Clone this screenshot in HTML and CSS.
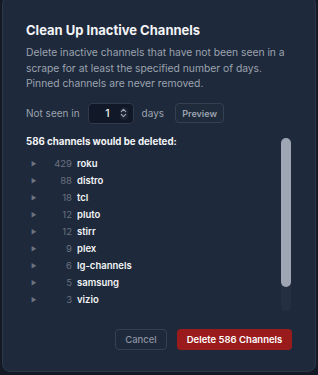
FILE: index.html
```html
<!DOCTYPE html>
<html>
<head>
<meta charset="utf-8">
<link rel="stylesheet" href="styles.css">
</head>
<body>
<div class="dialog">
  <h2 class="title">Clean Up Inactive Channels</h2>
  <p class="desc">Delete inactive channels that have not been seen in a scrape for at least the specified number of days. Pinned channels are never removed.</p>
  <div class="controls">
    <span class="label">Not seen in</span>
    <div class="num">
      <span class="num-val">1</span>
      <span class="spin"><svg width="7" height="12" viewBox="0 0 7 12"><path d="M1.3 4.6 L3.5 2.3 L5.7 4.6 M1.3 7.4 L3.5 9.7 L5.7 7.4" fill="none" stroke="#a3aab6" stroke-width="1.1" stroke-linecap="round" stroke-linejoin="round"/></svg></span>
    </div>
    <span class="label days">days</span>
    <button class="btn-small">Preview</button>
  </div>
  <div class="listwrap">
    <div class="list">
      <div class="heading">586 channels would be deleted:</div>
      <div class="row"><span class="tri">►</span><span class="cnt">429</span><span class="name">roku</span></div>
      <div class="row"><span class="tri">►</span><span class="cnt">88</span><span class="name">distro</span></div>
      <div class="row"><span class="tri">►</span><span class="cnt">18</span><span class="name">tcl</span></div>
      <div class="row"><span class="tri">►</span><span class="cnt">12</span><span class="name">pluto</span></div>
      <div class="row"><span class="tri">►</span><span class="cnt">12</span><span class="name">stirr</span></div>
      <div class="row"><span class="tri">►</span><span class="cnt">9</span><span class="name">plex</span></div>
      <div class="row"><span class="tri">►</span><span class="cnt">6</span><span class="name">lg-channels</span></div>
      <div class="row"><span class="tri">►</span><span class="cnt">5</span><span class="name">samsung</span></div>
      <div class="row"><span class="tri">►</span><span class="cnt">3</span><span class="name">vizio</span></div>
      <div class="row"><span class="tri">►</span><span class="cnt">2</span><span class="name">tubi</span></div>
    </div>
    <div class="track"><div class="thumb"></div></div>
  </div>
  <div class="actions">
    <button class="btn-cancel">Cancel</button>
    <button class="btn-danger">Delete 586 Channels</button>
  </div>
</div>
</body>
</html>
```
FILE: styles.css
```css
html, body {
  margin: 0;
  padding: 0;
  background: #131a26;
  font-family: Inter, "Noto Sans", "Liberation Sans", sans-serif;
  overflow: hidden;
}
.dialog {
  margin: -4px 2px 0 2px;
  height: 376px;
  box-sizing: border-box;
  background: #1e293b;
  border: 1px solid #2c3748;
  border-radius: 8px;
  padding: 23px 23px 0 23px;
  display: flex;
  flex-direction: column;
}
.title {
  margin: 0;
  font-size: 13px;
  line-height: 20px;
  font-weight: 700;
  color: #f3f4f6;
}
.desc {
  margin: 5px 0 0 0;
  font-size: 10.3px;
  line-height: 15.5px;
  color: #9ca3af;
}
.controls {
  margin-top: 11px;
  display: flex;
  align-items: center;
  height: 21px;
  font-size: 10px;
  color: #9ca3af;
}
.num {
  margin-left: 8px;
  width: 46px;
  height: 21px;
  box-sizing: border-box;
  background: #111827;
  border: 1px solid #2f3a4b;
  border-radius: 4px;
  display: flex;
  align-items: center;
  justify-content: flex-end;
  padding-right: 5px;
  gap: 10px;
  color: #f3f4f6;
  font-size: 10.5px;
  font-weight: 500;
}
.spin {
  display: flex;
  align-items: center;
  justify-content: center;
  width: 8px;
  height: 13px;
  border-radius: 4px;
  background: #1b2433;
}
.spin svg { display: block; }
.days { margin-left: 8px; }
.btn-small {
  margin-left: 11px;
  height: 20px;
  width: 49px;
  padding: 0;
  background: #1f2a3b;
  border: 1px solid #334155;
  border-radius: 4px;
  color: #9ca3af;
  font-family: inherit;
  font-size: 9px;
  font-weight: 600;
}
.listwrap {
  margin-top: 10.5px;
  height: 178px;
  display: flex;
  margin-right: 1px;
}
.list {
  flex: 1;
  overflow: hidden;
}
.track {
  width: 10px;
  margin-top: 4px;
  margin-bottom: 1px;
  background: #243042;
  border-radius: 5px;
}
.thumb {
  height: 149px;
  background: #9fa6b3;
  border-radius: 5px;
}
.heading {
  font-size: 9.7px;
  line-height: 16px;
  font-weight: 700;
  color: #f3f4f6;
  margin-bottom: 4.5px;
}
.row {
  display: flex;
  align-items: center;
  height: 17.1px;
  font-size: 9.5px;
}
.tri {
  width: 10px;
  margin-left: 5px;
  font-size: 6px;
  color: #6b7280;
}
.cnt {
  width: 31px;
  text-align: right;
  color: #6b7280;
}
.name {
  margin-left: 5px;
  color: #f3f4f6;
  font-weight: 600;
}
.actions {
  margin-top: 17px;
  display: flex;
  justify-content: flex-end;
  gap: 10px;
}
.actions button {
  height: 21px;
  border-radius: 4px;
  font-family: inherit;
  font-size: 9.5px;
  padding: 0;
}
.btn-cancel {
  width: 52px;
  background: transparent;
  border: 1px solid #334155;
  color: #8b93a1;
  font-weight: 500;
}
.btn-danger {
  width: 115px;
  background: #991b1b;
  border: none;
  color: #fff;
  font-weight: 600;
}
```
